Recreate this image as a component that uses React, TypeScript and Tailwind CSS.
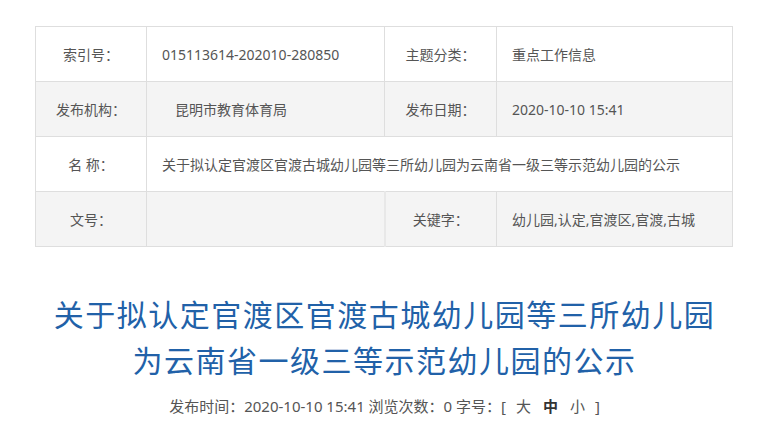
const font = { fontFamily: '"Noto Sans", "Noto Sans CJK SC", sans-serif' };

const labelCell = 'border border-[#dedede] text-center';
const valueCell = 'border border-[#dedede] pl-[15px] text-left';

export default function App() {
  return (
    <main className="min-h-[435px] w-[769px] bg-white text-[14px] text-[#555]" style={font}>
      <div className="pt-[26px] pl-[35px]">
        <table className="w-[697px] table-fixed border-collapse">
          <colgroup>
            <col className="w-[111px]" />
            <col className="w-[238px]" />
            <col className="w-[112px]" />
            <col className="w-[236px]" />
          </colgroup>
          <tbody>
            <tr className="h-[55px] bg-white">
              <td className={labelCell}>索引号：</td>
              <td className={valueCell}>015113614-202010-280850</td>
              <td className={labelCell}>主题分类：</td>
              <td className={valueCell}>重点工作信息</td>
            </tr>
            <tr className="h-[55px] bg-[#f4f4f4]">
              <td className={labelCell}>发布机构：</td>
              <td className={valueCell}>
                <span className="pl-[13px]">昆明市教育体育局</span>
              </td>
              <td className={labelCell}>发布日期：</td>
              <td className={valueCell}>2020-10-10 15:41</td>
            </tr>
            <tr className="h-[55px] bg-white">
              <td className={labelCell}>名 称：</td>
              <td className={valueCell} colSpan={3}>
                关于拟认定官渡区官渡古城幼儿园等三所幼儿园为云南省一级三等示范幼儿园的公示
              </td>
            </tr>
            <tr className="h-[55px] bg-[#f4f4f4]">
              <td className="border border-[#dedede] text-center">文号：</td>
              <td className="border border-r-2 border-[#dedede] border-r-[#e8e8e8]"></td>
              <td className={labelCell}>关键字：</td>
              <td className={valueCell}>幼儿园,认定,官渡区,官渡,古城</td>
            </tr>
          </tbody>
        </table>
      </div>

      <h1 className="mt-[45px] px-[20px] text-center text-[30px] leading-[46px] font-normal tracking-[1.5px] text-[#2161a8]">
        关于拟认定官渡区官渡古城幼儿园等三所幼儿园
        <br />
        为云南省一级三等示范幼儿园的公示
      </h1>

      <p className="mt-[12px] text-center text-[15px] leading-5 text-[#555]">
        发布时间：2020-10-10 15:41 浏览次数：0 字号：[ <span className="mx-[6px]">大</span>
        <span className="mx-[6px] font-bold text-[#333]">中</span>
        <span className="mx-[6px]">小</span> ]
      </p>
    </main>
  );
}
